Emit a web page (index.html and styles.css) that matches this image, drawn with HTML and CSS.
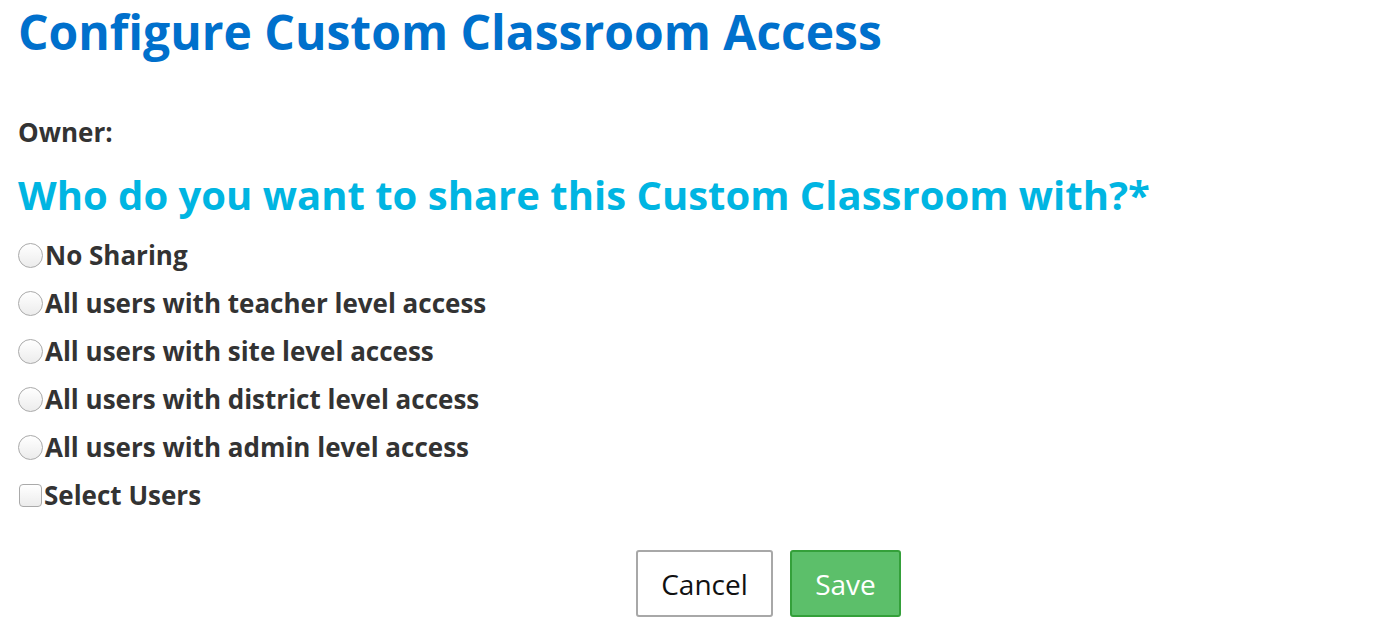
FILE: index.html
```html
<!DOCTYPE html>
<html lang="en">
<head>
  <meta charset="UTF-8">
  <title>Configure Custom Classroom Access</title>
  <link rel="stylesheet" href="styles.css">
</head>
<body>
  <div class="page">
    <h1 class="title">Configure Custom Classroom Access</h1>

    <div class="owner">Owner:</div>

    <h2 class="question">Who do you want to share this Custom Classroom with?*</h2>

    <div class="options">
      <label class="option"><input type="radio" name="share"> No Sharing</label>
      <label class="option"><input type="radio" name="share"> All users with teacher level access</label>
      <label class="option"><input type="radio" name="share"> All users with site level access</label>
      <label class="option"><input type="radio" name="share"> All users with district level access</label>
      <label class="option"><input type="radio" name="share"> All users with admin level access</label>
      <label class="option"><input type="checkbox"> Select Users</label>
    </div>

    <div class="actions">
      <button class="btn btn-cancel">Cancel</button>
      <button class="btn btn-save">Save</button>
    </div>
  </div>
</body>
</html>
```

FILE: styles.css
```css
* {
  margin: 0;
  padding: 0;
  box-sizing: border-box;
  font-family: "Open Sans", sans-serif;
}
body {
  background: #fff;
  color: #333;
}
.page {
  padding: 0 18px;
}
.title {
  color: #0070cc;
  font-size: 48px;
  font-weight: 700;
  line-height: 64px;
}
.owner {
  margin-top: 53px;
  font-size: 26px;
  font-weight: 700;
  line-height: 30px;
}
.question {
  margin-top: 22px;
  margin-bottom: 10px;
  color: #00b5e2;
  font-size: 40px;
  font-weight: 700;
  line-height: 52px;
}
.options {
  display: flex;
  flex-direction: column;
}
.option {
  display: flex;
  align-items: center;
  height: 48px;
  font-size: 26px;
  font-weight: 700;
}
.option input {
  appearance: none;
  width: 25px;
  height: 25px;
  margin-right: 2px;
  border: 1px solid #aaa;
  background: linear-gradient(#fff, #ececec);
}
.option input[type="radio"] {
  border-radius: 50%;
}
.option input[type="checkbox"] {
  width: 23px;
  height: 23px;
  margin-left: 1px;
  margin-right: 2px;
  border-radius: 4px;
}
.actions {
  display: flex;
  gap: 17px;
  margin-top: 31px;
  padding-left: 618px;
}
.btn {
  height: 67px;
  font-size: 28px;
  border-radius: 3px;
  cursor: pointer;
}
.btn-cancel {
  width: 137px;
  background: #fff;
  color: #111;
  border: 2px solid #a8a8a8;
}
.btn-save {
  width: 111px;
  background: #5cbf6a;
  color: #fff;
  border: 2px solid #34a03a;
}
```
